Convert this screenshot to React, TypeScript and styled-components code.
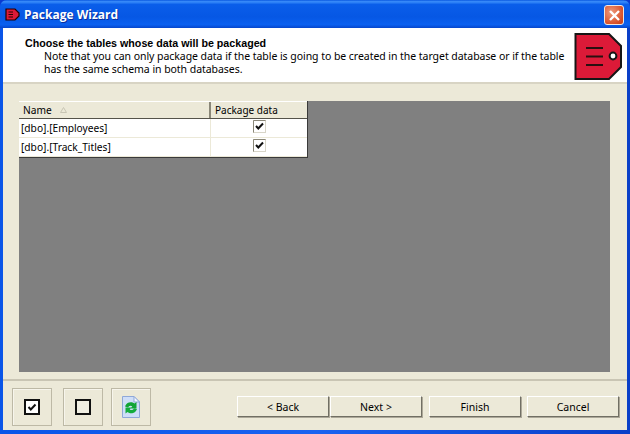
import React from "react";
import styled, { createGlobalStyle } from "styled-components";

const GlobalStyle = createGlobalStyle`
	html, body {
		margin: 0;
		padding: 0;
		background: #0a3ad0;
	}
	body {
		font-family: "Noto Sans", "Liberation Sans", sans-serif;
		font-size: 11px;
		color: #000;
	}
`;

const Window = styled.div`
	width: 630px;
	height: 434px;
	box-sizing: border-box;
	display: flex;
	flex-direction: column;
	border-radius: 7px 7px 0 0;
	overflow: hidden;
	padding: 0 3px 4px 3px;
	background: linear-gradient(90deg, #0a55e8 0, #1a63f0 50%, #0a3fc8 100%);
	border-bottom: 0;
`;

const TitleBar = styled.div`
	height: 28px;
	margin: 0 -3px;
	padding: 0 6px 0 5px;
	flex-shrink: 0;
	display: flex;
	align-items: center;
	gap: 4px;
	background: linear-gradient(180deg, #0a58e0 0, #3b8efb 6%, #0a5eea 16%, #0657e4 60%, #0a60f0 88%, #0546cc 100%);
`;

const Title = styled.span`
	flex: 1;
	font-family: "Open Sans", "Liberation Sans", sans-serif;
	font-weight: 700;
	font-size: 12px;
	color: #fff;
	text-shadow: 1px 1px 0 #0a2f9c;
`;

const CloseButton = styled.div`
	width: 20px;
	height: 20px;
	box-sizing: border-box;
	border: 1px solid #f0e6e0;
	border-radius: 3px;
	background: radial-gradient(circle at 35% 35%, #ee9a7c, #d9512a 70%, #c23c18);
	display: flex;
	align-items: center;
	justify-content: center;
	margin-top: 2px;
`;

const Client = styled.div`
	flex: 1;
	min-height: 0;
	display: flex;
	flex-direction: column;
	background: #ece9d8;
`;

const Header = styled.div`
	height: 56px;
	flex-shrink: 0;
	box-sizing: border-box;
	background: #fff;
	border-bottom: 2px solid #d8d4c4;
	display: flex;
	justify-content: space-between;
	padding: 9px 5px 0 22px;
`;

const HeaderText = styled.div`
	display: flex;
	flex-direction: column;
`;

const Heading = styled.div`
	font-family: "Liberation Sans", sans-serif;
	font-weight: 700;
	font-size: 10.7px;
	line-height: 13px;
`;

const Note = styled.div`
	font-family: "Noto Sans", sans-serif;
	font-size: 10.5px;
	line-height: 13px;
	padding-left: 19px;
	letter-spacing: -0.05px;
`;

const TagIcon = styled.svg`
	width: 48px;
	height: 48px;
	margin-top: -4px;
	flex-shrink: 0;
`;

const Body = styled.div`
	flex: 1;
	min-height: 0;
	padding: 17px 17px 7px 16px;
	display: flex;
`;

const GridArea = styled.div`
	flex: 1;
	background: #808080;
	align-self: stretch;
`;

const DataGrid = styled.div`
	width: 288px;
	background: #fff;
	border-right: 1px solid #3a3a3a;
	border-bottom: 1px solid #3a3a3a;
`;

const GridRow = styled.div<{ $head?: boolean }>`
	display: grid;
	grid-template-columns: 192px 96px;
	height: ${(p) => (p.$head ? "18px" : "19px")};
	box-sizing: border-box;
	background: ${(p) => (p.$head ? "#ece9d8" : "#fff")};
	border-bottom: 1px solid ${(p) => (p.$head ? "#55534a" : "#ece9d8")};
	border-top: ${(p) => (p.$head ? "1px solid #fff" : "0")};
`;

const NameCell = styled.div<{ $head?: boolean }>`
	display: flex;
	align-items: center;
	gap: 8px;
	padding-left: ${(p) => (p.$head ? "4px" : "2px")};
	border-right: ${(p) => (p.$head ? "2px solid #8a8778" : "1px solid #ece9d8")};
	font-size: 10.2px;
	white-space: nowrap;
`;

const CheckCell = styled.div<{ $head?: boolean }>`
	display: flex;
	align-items: center;
	justify-content: ${(p) => (p.$head ? "flex-start" : "center")};
	padding-left: ${(p) => (p.$head ? "4px" : "0")};
	font-size: 10px;
	white-space: nowrap;
`;

const CellCheck = styled.svg`
	width: 13px;
	height: 13px;
	margin-top: -3px;
`;

const Footer = styled.div`
	height: 51px;
	flex-shrink: 0;
	box-sizing: border-box;
	border-top: 2px solid #c9c5b4;
	display: flex;
	align-items: flex-start;
	padding: 7px 8px 0 9px;
`;

const ToolGroup = styled.div`
	display: flex;
	flex: 1;
`;

const ToolButton = styled.div<{ $gap?: number }>`
	width: 40px;
	height: 38px;
	margin-left: ${(p) => p.$gap ?? 0}px;
	box-sizing: border-box;
	border: 1px solid #bdb9a6;
	display: flex;
	align-items: center;
	justify-content: center;
	box-shadow: inset 1px 1px 0 #f7f5ec;
`;

const NavGroup = styled.div`
	display: flex;
	margin-top: 8px;
`;

const NavButton = styled.div<{ $gap?: number }>`
	width: 92px;
	height: 21px;
	margin-left: ${(p) => p.$gap ?? 0}px;
	box-sizing: border-box;
	background: #ece9d8;
	border-top: 1px solid #fff;
	border-left: 1px solid #fff;
	border-right: 1px solid #716f64;
	border-bottom: 1px solid #716f64;
	box-shadow: 1px 1px 0 #aca899;
	display: flex;
	align-items: center;
	justify-content: center;
	font-size: 10.5px;
`;

const RedTag: React.FC = () => (
	<TagIcon viewBox="0 0 48 48">
		<path d="M1.5 1 H35 L47 13 V34 L35 46 H1.5 Z" fill="#dc1a38" stroke="#161616" strokeWidth="2" />
		<path d="M12 15 H29 M12 23.5 H29 M12 32 H29" stroke="#2a1010" strokeWidth="2" />
		<circle cx="39" cy="23" r="3.4" fill="#fff" stroke="#161616" strokeWidth="2" />
	</TagIcon>
);

const AppIcon: React.FC = () => (
	<svg width="15" height="15" viewBox="0 0 15 15">
		<path d="M1 2 H10 L14 6 V9 L10 13 H1 Z" fill="#dc1a38" stroke="#200" strokeWidth="1.2" />
		<path d="M3.5 5 H8 M3.5 7.5 H8 M3.5 10 H8" stroke="#300" strokeWidth="1" />
	</svg>
);

const GridCheck: React.FC = () => (
	<CellCheck viewBox="0 0 13 13">
		<rect x="0.5" y="0.5" width="12" height="12" fill="#fff" stroke="#d8d5c8" />
		<path d="M0.5 12.5 V0.5 H12.5" fill="none" stroke="#8a8778" />
		<path d="M3 6 L5.3 8.5 L10 3.5" fill="none" stroke="#111" strokeWidth="2" />
	</CellCheck>
);

const SelectIcon: React.FC<{ checked?: boolean }> = ({ checked }) => (
	<svg width="16" height="16" viewBox="0 0 16 16">
		<rect x="1" y="1" width="14" height="14" fill={checked ? "#fff" : "#f0eee2"} stroke="#111" strokeWidth="2" />
		{checked && <path d="M4.5 8 L6.8 10.5 L11.5 5.5" fill="none" stroke="#111" strokeWidth="2" />}
	</svg>
);

const RefreshIcon: React.FC = () => (
	<svg width="18" height="22" viewBox="0 0 18 22">
		<path d="M0.5 0.5 H12 L17.5 6 V21.5 H0.5 Z" fill="#cfdef8" stroke="#8fa8d8" />
		<path d="M12 0.5 V6 H17.5 Z" fill="#f4f8ff" stroke="#8fa8d8" />
		<path d="M3 10.5 A6 6 0 0 1 12.5 7.5 L14.5 6 V12.5 H8.5 L10.3 10.3 A3 3 0 0 0 6 11.5 Z" fill="#12a436" />
		<path d="M15 13 A6 6 0 0 1 5.5 16 L3.5 17.5 V11.5 H9.5 L7.7 13.4 A3 3 0 0 0 12 12.2 Z" fill="#14ac3c" />
	</svg>
);

const App: React.FC = () => {
	const rows = ["[dbo].[Employees]", "[dbo].[Track_Titles]"];

	return (
		<>
			<GlobalStyle />
			<Window>
				<TitleBar>
					<AppIcon />
					<Title>Package Wizard</Title>
					<CloseButton>
						<svg width="13" height="13" viewBox="0 0 13 13">
							<path d="M2 2 L11 11 M11 2 L2 11" stroke="#fff" strokeWidth="2.4" />
						</svg>
					</CloseButton>
				</TitleBar>
				<Client>
					<Header>
						<HeaderText>
							<Heading>Choose the tables whose data will be packaged</Heading>
							<Note>
								Note that you can only package data if the table is going to be created in the target database or if the table
								<br />
								has the same schema in both databases.
							</Note>
						</HeaderText>
						<RedTag />
					</Header>
					<Body>
						<GridArea>
							<DataGrid>
								<GridRow $head>
									<NameCell $head>
										Name
										<svg width="7" height="6" viewBox="0 0 7 6">
											<path d="M3.5 0.5 L6.5 5.5 H0.5 Z" fill="none" stroke="#c8c5b4" />
										</svg>
									</NameCell>
									<CheckCell $head>Package data</CheckCell>
								</GridRow>
								{rows.map((name) => (
									<GridRow key={name}>
										<NameCell>{name}</NameCell>
										<CheckCell>
											<GridCheck />
										</CheckCell>
									</GridRow>
								))}
							</DataGrid>
						</GridArea>
					</Body>
					<Footer>
						<ToolGroup>
							<ToolButton>
								<SelectIcon checked />
							</ToolButton>
							<ToolButton $gap={11}>
								<SelectIcon />
							</ToolButton>
							<ToolButton $gap={8}>
								<RefreshIcon />
							</ToolButton>
						</ToolGroup>
						<NavGroup>
							<NavButton>&lt; Back</NavButton>
							<NavButton $gap={1}>Next &gt;</NavButton>
							<NavButton $gap={7}>Finish</NavButton>
							<NavButton $gap={6}>Cancel</NavButton>
						</NavGroup>
					</Footer>
				</Client>
			</Window>
		</>
	);
};

export default App;
